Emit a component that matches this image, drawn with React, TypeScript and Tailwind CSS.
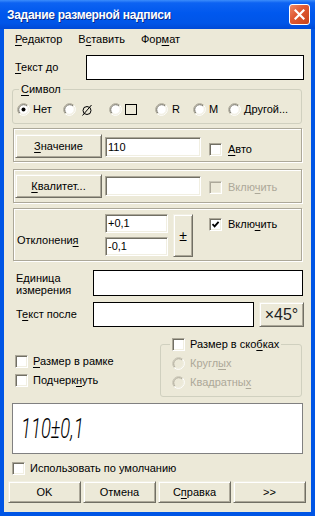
import React from "react";

const sunken =
  "border border-t-[#ACA899] border-l-[#ACA899] border-b-white border-r-white shadow-[inset_1px_1px_0_#716F64,inset_-1px_-1px_0_#F1EFE2] bg-white";
const raised =
  "border border-t-[#F1EFE2] border-l-[#F1EFE2] border-b-[#716F64] border-r-[#716F64] shadow-[inset_1px_1px_0_#ffffff,inset_-1px_-1px_0_#ACA899] bg-[#ECE9D8] flex items-center justify-center";
const etched =
  "border border-[#ACA899] shadow-[inset_1px_1px_0_#ffffff,1px_1px_0_#ffffff]";
const blackInput = "border border-black bg-white";

function U({ children }: { children: React.ReactNode }) {
  return <span className="underline underline-offset-[2px] decoration-1">{children}</span>;
}

function Check({ checked, disabled }: { checked?: boolean; disabled?: boolean }) {
  return (
    <span
      className={
        disabled
          ? "w-[13px] h-[13px] shrink-0 border border-t-[#CAC7B8] border-l-[#CAC7B8] border-b-white border-r-white shadow-[inset_1px_1px_0_#ACA899,inset_-1px_-1px_0_#F1EFE2] bg-[#ECE9D8] flex items-center justify-center"
          : "w-[13px] h-[13px] shrink-0 " + sunken + " flex items-center justify-center"
      }
    >
      {checked && (
        <svg width="9" height="9" viewBox="0 0 9 9">
          <path d="M1.5 4.2 L3.6 6.4 L7.6 1.8" stroke="#000" strokeWidth="1.8" fill="none" />
        </svg>
      )}
    </span>
  );
}

function Radio({ checked, disabled }: { checked?: boolean; disabled?: boolean }) {
  return (
    <svg width="13" height="13" viewBox="0 0 13 13" className="shrink-0">
      <circle cx="6.5" cy="6.5" r="5" fill={disabled ? "#ECE9D8" : "#ffffff"} />
      <path d="M2.26 10.74 A6 6 0 0 1 10.74 2.26" stroke={disabled ? "#C9C6B6" : "#ACA899"} fill="none" />
      <path d="M10.74 2.26 A6 6 0 0 1 2.26 10.74" stroke="#ffffff" fill="none" />
      <path d="M2.97 10.03 A5 5 0 0 1 10.03 2.97" stroke={disabled ? "#ACA899" : "#716F64"} fill="none" />
      <path d="M10.03 2.97 A5 5 0 0 1 2.97 10.03" stroke="#F1EFE2" fill="none" />
      {checked && <circle cx="6.5" cy="6.5" r="2" fill="#000" />}
    </svg>
  );
}

export default function App() {
  return (
    <div className="w-[315px] h-[516px] bg-[#0055E5] flex flex-col font-['Liberation_Sans',Arial,sans-serif] text-[11px] leading-[13px] text-black select-none">
      {/* Title bar */}
      <div className="h-[29px] shrink-0 flex items-center pl-[7px] pr-[5px] bg-[linear-gradient(to_bottom,#3C8DFB_0%,#0D63F2_10%,#0058EE_45%,#0055E8_80%,#0049D6_100%)]">
        <span className="text-white font-bold text-[12px] leading-[16px] tracking-[-0.3px] [text-shadow:1px_1px_0_#0A2A8A]">
          Задание размерной надписи
        </span>
        <div className="ml-auto w-[21px] h-[21px] rounded-[3px] border border-white bg-[linear-gradient(135deg,#F08A68_0%,#E05A34_40%,#C9421A_100%)] flex items-center justify-center">
          <svg width="11" height="11" viewBox="0 0 11 11">
            <path d="M1.5 1.5 L9.5 9.5 M9.5 1.5 L1.5 9.5" stroke="#fff" strokeWidth="2.2" strokeLinecap="square" />
          </svg>
        </div>
      </div>

      {/* Client area */}
      <div className="flex-1 mx-[4px] mb-[4px] bg-[#ECE9D8] flex flex-col">
        {/* Menu */}
        <div className="h-[21px] flex items-center pl-[3px]">
          <span className="px-[8px]"><U>Р</U>едактор</span>
          <span className="px-[8px]">В<U>с</U>тавить</span>
          <span className="px-[8px]">Фор<U>м</U>ат</span>
        </div>

        {/* Текст до */}
        <div className="mt-[5px] flex items-center pl-[11px]">
          <span className="w-[71px]"><U>Т</U>екст до</span>
          <div className={`w-[218px] h-[25px] ${blackInput}`} />
        </div>

        {/* Символ */}
        <fieldset className="ml-[8px] mt-[3px] w-[290px] h-[41px] border border-[#D0D0BF] rounded-[3px]">
          <legend className="ml-[6px] px-[2px]"><U>С</U>имвол</legend>
          <div className="flex items-center mt-[7px] pl-[4px]">
            <div className="w-[46px] flex items-center">
              <Radio checked />
              <span className="ml-[3px]">Нет</span>
            </div>
            <div className="w-[46px] flex items-center">
              <Radio />
              <svg width="12" height="12" viewBox="0 0 12 12" className="ml-[5px]">
                <circle cx="6" cy="6.5" r="4" stroke="#000" strokeWidth="1" fill="none" />
                <path d="M1.5 11.5 L10.5 1" stroke="#000" strokeWidth="1" />
              </svg>
            </div>
            <div className="w-[46px] flex items-center">
              <Radio />
              <span className="ml-[3px] w-[12px] h-[11px] border-[1.5px] border-black" />
            </div>
            <div className="w-[38px] flex items-center">
              <Radio />
              <span className="ml-[4px]">R</span>
            </div>
            <div className="w-[35px] flex items-center">
              <Radio />
              <span className="ml-[3px]">M</span>
            </div>
            <div className="flex items-center">
              <Radio />
              <span className="ml-[3px]">Другой...</span>
            </div>
          </div>
        </fieldset>

        {/* Значение */}
        <div className={`ml-[9px] mt-[4px] w-[289px] h-[34px] ${etched} flex items-start`}>
          <div className={`ml-[1px] mt-[5px] w-[87px] h-[24px] ${raised}`}>
            <span><U>З</U>начение</span>
          </div>
          <div className={`ml-[3px] mt-[8px] w-[96px] h-[20px] ${sunken} pl-[2px] flex items-center`}>110</div>
          <div className="ml-[8px] mt-[14px] flex items-center">
            <Check />
            <span className="ml-[6px]"><U>А</U>вто</span>
          </div>
        </div>

        {/* Квалитет */}
        <div className={`ml-[9px] mt-[7px] w-[289px] h-[34px] ${etched} flex items-start`}>
          <div className={`ml-[1px] mt-[4px] w-[87px] h-[24px] ${raised}`}>
            <span><U>К</U>валитет...</span>
          </div>
          <div className={`ml-[3px] mt-[6px] w-[96px] h-[20px] ${sunken}`} />
          <div className="ml-[8px] mt-[11px] flex items-center">
            <Check disabled />
            <span className="ml-[6px] text-[#ACA899]">Вклю<U>ч</U>ить</span>
          </div>
        </div>

        {/* Отклонения */}
        <div className={`ml-[9px] mt-[5px] w-[289px] h-[53px] ${etched} flex items-start`}>
          <div className="ml-[3px] mt-[25px] w-[88px]">Отклонени<U>я</U></div>
          <div className="mt-[5px] flex flex-col gap-[4px]">
            <div className={`w-[63px] h-[19px] ${sunken} pl-[2px] flex items-center`}>+0,1</div>
            <div className={`w-[63px] h-[19px] ${sunken} pl-[2px] flex items-center`}>-0,1</div>
          </div>
          <div className={`ml-[5px] mt-[5px] w-[20px] h-[43px] ${raised} text-[14px] leading-[16px]`}>±</div>
          <div className="ml-[16px] mt-[9px] flex items-center">
            <Check checked />
            <span className="ml-[6px]">Вклю<U>ч</U>ить</span>
          </div>
        </div>

        {/* Единица измерения */}
        <div className="mt-[9px] flex items-start pl-[12px]">
          <div className="w-[77px] mt-[2px] leading-[12px]">
            Единица
            <br />
            измерения
          </div>
          <div className={`w-[210px] h-[26px] ${blackInput}`} />
        </div>

        {/* Текст после */}
        <div className="mt-[6px] flex items-center pl-[12px]">
          <span className="w-[77px]">Т<U>е</U>кст после</span>
          <div className={`w-[161px] h-[25px] ${blackInput}`} />
          <div className={`ml-[5px] w-[45px] h-[25px] ${raised} text-[16px] leading-[18px] text-[#222]`}>×45°</div>
        </div>

        {/* Checkboxes + group */}
        <div className="mt-[11px] flex items-start">
          <div className="w-[156px] pl-[11px] pt-[17px] flex flex-col gap-[6px]">
            <div className="flex items-center">
              <Check />
              <span className="ml-[5px]"><U>Р</U>азмер в рамке</span>
            </div>
            <div className="flex items-center">
              <Check />
              <span className="ml-[5px]">Подчерк<U>н</U>уть</span>
            </div>
          </div>
          <fieldset className="w-[142px] h-[59px] border border-[#D0D0BF] rounded-[3px]">
            <legend className="ml-[9px] px-[2px]">
              <span className="flex items-center">
                <Check />
                <span className="ml-[5px]">Размер в ско<U>б</U>ках</span>
              </span>
            </legend>
            <div className="pl-[11px] mt-[6px] flex flex-col gap-[6px] text-[#ACA899]">
              <div className="flex items-center">
                <Radio disabled />
                <span className="ml-[5px]">Кругл<U>ы</U>х</span>
              </div>
              <div className="flex items-center">
                <Radio disabled />
                <span className="ml-[5px]">Квадратны<U>х</U></span>
              </div>
            </div>
          </fieldset>
        </div>

        {/* Preview */}
        <div className="ml-[8px] mt-[6px] w-[291px] h-[51px] border border-[#808080] bg-white flex items-center pl-[8px] overflow-hidden">
          <span className="inline-block origin-left scale-x-[0.66] font-['Roboto',sans-serif] font-light italic text-[28px] leading-[30px] text-black">
            110±0,1
          </span>
        </div>

        {/* Use by default */}
        <div className="mt-[8px] pl-[8px] flex items-center">
          <Check />
          <span className="ml-[5px]">Использовать по умолчанию</span>
        </div>

        {/* Buttons */}
        <div className="mt-[6px] pl-[4px] flex gap-[2px]">
          <div className={`w-[73px] h-[22px] ${raised}`}>OK</div>
          <div className={`w-[73px] h-[22px] ${raised}`}>Отмена</div>
          <div className={`w-[73px] h-[22px] ${raised}`}>
            <span>С<U>п</U>равка</span>
          </div>
          <div className={`w-[73px] h-[22px] ${raised}`}>&gt;&gt;</div>
        </div>
      </div>
    </div>
  );
}
